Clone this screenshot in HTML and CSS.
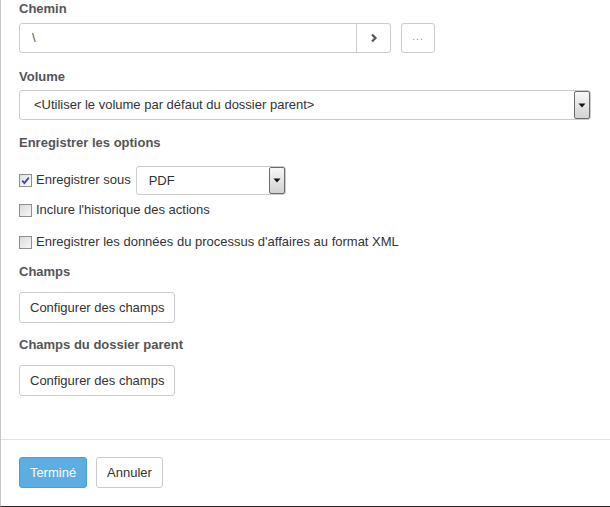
FILE: index.html
```html
<!DOCTYPE html>
<html lang="fr">
<head>
<meta charset="utf-8">
<title>Options</title>
<link rel="stylesheet" href="styles.css">
</head>
<body>
<div class="panel">
  <div class="content">
    <div class="label">Chemin</div>
    <div class="path-row">
      <div class="input-group">
        <div class="input">\</div>
        <div class="addon"><svg width="8" height="10" viewBox="0 0 8 10"><path d="M2 1.5 L5.5 5 L2 8.5" fill="none" stroke="#555" stroke-width="2.2"/></svg></div>
      </div>
      <div class="btn-dots">...</div>
    </div>

    <div class="label label-volume">Volume</div>
    <div class="select select-wide">
      <span class="select-text">&lt;Utiliser le volume par défaut du dossier parent&gt;</span>
      <span class="arrow"><svg width="8" height="5" viewBox="0 0 8 5"><path d="M0.5 0.5 H7.5 L4 4.5 Z" fill="#111"/></svg></span>
    </div>

    <div class="label label-options">Enregistrer les options</div>
    <div class="check-row row-save">
      <span class="cb checked"><svg width="11" height="11" viewBox="0 0 11 11"><path d="M2.2 5.6 L4.4 8 L8.8 2.6" fill="none" stroke="#3b4a9a" stroke-width="1.8"/></svg></span>
      <span class="cb-text">Enregistrer sous</span>
      <div class="select select-pdf">
        <span class="select-text">PDF</span>
        <span class="arrow"><svg width="8" height="5" viewBox="0 0 8 5"><path d="M0.5 0.5 H7.5 L4 4.5 Z" fill="#111"/></svg></span>
      </div>
    </div>
    <div class="check-row row-hist">
      <span class="cb"></span>
      <span class="cb-text">Inclure l'historique des actions</span>
    </div>
    <div class="check-row row-xml">
      <span class="cb"></span>
      <span class="cb-text">Enregistrer les données du processus d'affaires au format XML</span>
    </div>

    <div class="label label-champs">Champs</div>
    <div class="btn">Configurer des champs</div>

    <div class="label label-parent">Champs du dossier parent</div>
    <div class="btn btn-second">Configurer des champs</div>
  </div>
  <div class="footer">
    <div class="btn btn-primary">Terminé</div>
    <div class="btn btn-cancel">Annuler</div>
  </div>
</div>
</body>
</html>
```

FILE: styles.css
```css
html, body {
  margin: 0;
  padding: 0;
  background: #fff;
}
body {
  font-family: "Liberation Sans", Arial, sans-serif;
  font-size: 13px;
  color: #333;
  width: 610px;
  height: 507px;
  overflow: hidden;
}
.panel {
  box-sizing: border-box;
  height: 507px;
  border-left: 1px solid #c4c4c4;
  border-bottom: 1px solid #2a2426;
  display: flex;
  flex-direction: column;
}
.content {
  flex: 1;
  padding: 0 19px 0 18px;
}
.label {
  font-weight: bold;
  color: #555;
  line-height: 18px;
  height: 18px;
}
.path-row {
  margin-top: 5px;
  display: flex;
  align-items: center;
  gap: 10px;
}
.input-group {
  display: flex;
  height: 30px;
  box-sizing: border-box;
  border: 1px solid #ccc;
  border-radius: 3px;
  width: 372px;
}
.input {
  flex: 1;
  line-height: 28px;
  padding-left: 12px;
  color: #555;
}
.addon {
  width: 33px;
  border-left: 1px solid #ccc;
  display: flex;
  align-items: center;
  justify-content: center;
}
.btn-dots {
  box-sizing: border-box;
  width: 34px;
  height: 30px;
  border: 1px solid #ccc;
  border-radius: 3px;
  text-align: center;
  line-height: 26px;
  color: #888;
  font-size: 10px;
  letter-spacing: 1px;
}
.label-volume { margin-top: 15px; }
.select {
  box-sizing: border-box;
  display: flex;
  align-items: stretch;
  border: 1px solid #ccc;
  border-radius: 3px;
  background: #fff;
}
.select-wide {
  margin-top: 4px;
  height: 30px;
  width: 572px;
}
.select-text {
  flex: 1;
  line-height: 28px;
  padding-left: 14px;
  color: #333;
  white-space: nowrap;
}
.arrow {
  box-sizing: border-box;
  width: 16px;
  margin: 0;
  border: 1px solid #6b6b6b;
  border-radius: 2px;
  background: linear-gradient(#f7f7f7, #d2d2d2);
  display: flex;
  align-items: center;
  justify-content: center;
}
.label-options { margin-top: 14px; }
.check-row {
  display: flex;
  align-items: center;
  height: 18px;
}
.row-save {
  margin-top: 14px;
  height: 29px;
}
.row-hist { margin-top: 6px; }
.row-xml { margin-top: 14px; }
.cb {
  box-sizing: border-box;
  width: 13px;
  height: 13px;
  border: 1px solid #8e8f8f;
  background: linear-gradient(135deg, #dcdcdc, #f6f6f6);
  display: flex;
  align-items: center;
  justify-content: center;
  flex: none;
}
.cb.checked {
  background: linear-gradient(135deg, #e2e2e6, #fafafa);
}
.cb-text {
  margin-left: 4px;
  color: #333;
  position: relative;
  top: -1px;
}
.select-pdf {
  margin-left: 5px;
  width: 150px;
  height: 29px;
}
.select-pdf .select-text { padding-left: 12px; }
.label-champs { margin-top: 12px; }
.btn {
  box-sizing: border-box;
  display: inline-block;
  height: 31px;
  line-height: 29px;
  padding: 0 10px;
  border: 1px solid #ccc;
  border-radius: 3px;
  background: #fff;
  color: #333;
  white-space: nowrap;
}
.content .btn { margin-top: 11px; }
.label-parent { margin-top: 13px; }
.content .btn-second { margin-top: 11px; }
.footer {
  border-top: 1px solid #e3e3e3;
  padding: 17px 18px 18px 18px;
  display: flex;
  gap: 9px;
}
.btn-primary {
  background: #5dade2;
  border-color: #4b9fd5;
  color: #fff;
  width: 68px;
  text-align: center;
  padding: 0;
}
.btn-cancel {
  width: 67px;
  text-align: center;
  padding: 0;
}
```
